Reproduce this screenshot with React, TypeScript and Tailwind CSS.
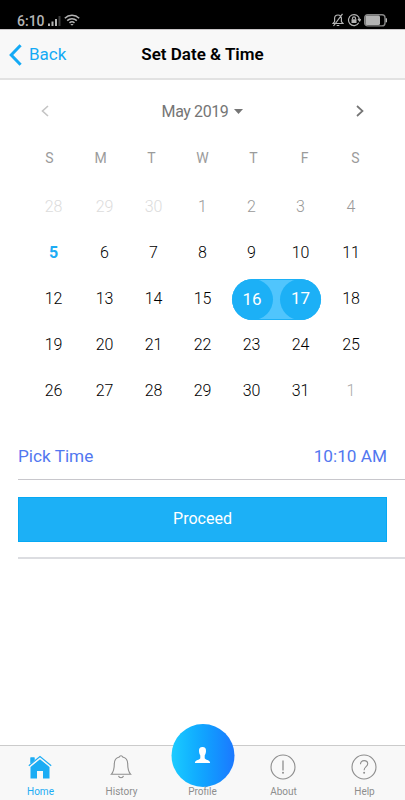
import { ReactNode } from 'react'

type Day = { n: number; tone?: 'out' | 'past' | 'next' | 'today' | 'start' | 'end' }

const weekdays = ['S', 'M', 'T', 'W', 'T', 'F', 'S']

const special: Record<number, Day['tone']> = { 5: 'today', 16: 'start', 17: 'end' }

const days: Day[] = [
  { n: 28, tone: 'out' },
  { n: 29, tone: 'out' },
  { n: 30, tone: 'out' },
  ...Array.from({ length: 31 }, (_, i): Day => ({ n: i + 1, tone: i < 4 ? 'past' : special[i + 1] })),
  { n: 1, tone: 'next' },
]

const tones = {
  out: 'text-[#dcdcdc] font-light',
  past: 'text-[#999] font-light',
  next: 'text-[#aaa] font-light',
  today: 'font-bold text-[#1cacf4]',
  start: '',
  end: '',
}

function StatusBar() {
  return (
    <div className="flex h-[29px] items-end justify-between bg-black pl-[17px] pr-[18px] text-[#b4b4b4]">
      <div className="flex items-center">
        <span className="w-[31px] text-[14px] font-medium leading-[16px]">6:10</span>
        <svg width="13" height="11" viewBox="0 0 13 11" fill="currentColor">
          <rect x="0" y="7.5" width="2" height="2.5" />
          <rect x="3.5" y="5.5" width="2" height="4.5" />
          <rect x="7" y="3" width="2" height="7" />
          <rect x="10.5" y="0" width="2" height="10" fill="#3d3d3d" />
        </svg>
        <svg className="mb-[3px] ml-[3px]" width="16" height="12" viewBox="0 0 16 12" fill="none" stroke="currentColor" strokeWidth="1.5">
          <path d="M.8 4.2a10.4 10.4 0 0 1 14.4 0M3.2 6.6a7 7 0 0 1 9.6 0M5.5 8.9a3.7 3.7 0 0 1 5 0" />
          <path d="M6.4 10 8 11.8 9.6 10Z" fill="currentColor" stroke="none" />
        </svg>
      </div>
      <div className="flex items-center pb-[2px]">
        <svg width="12" height="14" viewBox="0 0 12 14" fill="none" stroke="currentColor" strokeWidth="1.2">
          <path d="M1 10.5h10L9.4 8.6V5.3C9.4 3.2 8 2 6 2S2.6 3.2 2.6 5.3v3.3ZM4.7 12.5h2.6M10.5 .8 1.5 13" />
        </svg>
        <svg className="ml-[3px]" width="14" height="14" viewBox="0 0 14 14" fill="none" stroke="currentColor" strokeWidth="1.2">
          <path d="M11.8 9.8A5.5 5.5 0 1 1 12.5 6.5M11 6l1.7 2L13.7 6" />
          <rect x="4.5" y="6.3" width="5" height="3.7" fill="currentColor" stroke="none" />
          <path d="M5.5 6.5V5.3a1.5 1.5 0 0 1 3 0v1.2" />
        </svg>
        <svg className="ml-[3px]" width="23" height="13" viewBox="0 0 23 13">
          <rect x=".7" y=".7" width="20.3" height="11.2" rx="3" fill="none" stroke="#858585" strokeWidth="1.4" />
          <rect x="1.5" y="1.5" width="14.5" height="9.6" rx="1.5" fill="#b4b4b4" />
          <rect x="21.6" y="4.3" width="1.4" height="4" fill="#b4b4b4" />
        </svg>
      </div>
    </div>
  )
}

function Header() {
  return (
    <div className="grid h-[51px] grid-cols-3 items-center border-t border-b-2 border-t-[#c9c6c8] border-b-[#e2e2e2] bg-[#f8f8f8] pt-px">
      <button className="flex items-center pl-[9px] text-[17px] text-[#14aaf5]">
        <svg className="mr-[7px]" width="13" height="22" viewBox="0 0 13 22" fill="none" stroke="currentColor" strokeWidth="3">
          <path d="M11.6 1.2 2.2 11l9.4 9.8" />
        </svg>
        Back
      </button>
      <h1 className="whitespace-nowrap text-center text-[17px] font-semibold text-black">Set Date &amp; Time</h1>
    </div>
  )
}

function DayCell({ n, tone }: Day) {
  if (tone === 'start' || tone === 'end') {
    const start = tone === 'start'
    return (
      <div
        className={`flex h-[41px] items-center border-y border-[#1cb0f6] bg-[#50c5fd] text-[17px] text-white ${
          start ? 'ml-[4px] justify-start rounded-l-full' : 'mr-[5px] justify-end rounded-r-full'
        }`}
      >
        <span
          className={`flex h-[41px] w-[41px] items-center justify-center rounded-full bg-[#1cb0f6] ${
            start ? 'pt-px pr-px' : 'pb-px'
          }`}
        >
          {n}
        </span>
      </div>
    )
  }
  return <div className={`text-center ${tone ? tones[tone] : 'font-light text-black'}`}>{n}</div>
}

function Calendar() {
  return (
    <section>
      <div className="flex h-[62px] items-center justify-between pl-10 pr-[40px] text-[#757575]">
        <svg width="10" height="12" viewBox="0 0 10 12" fill="none" stroke="#c4c4c4" strokeWidth="1.6">
          <path d="M8 1 2.5 6 8 11" />
        </svg>
        <div className="flex items-center gap-[6px] pt-px text-[16px] tracking-[-0.4px]">
          May 2019
          <svg width="9" height="5" viewBox="0 0 9 5" fill="currentColor">
            <path d="M0 0h9L4.5 5Z" />
          </svg>
        </div>
        <svg width="10" height="12" viewBox="0 0 10 12" fill="none" stroke="currentColor" strokeWidth="1.7">
          <path d="M2 1l5.5 5L2 11" />
        </svg>
      </div>
      <div className="grid h-8 grid-cols-7 items-center px-6 text-center text-[14px] text-[#9b9b9b]">
        {weekdays.map((d, i) => (
          <span key={i}>{d}</span>
        ))}
      </div>
      <div className="ml-7 mt-[10px] grid auto-rows-[46px] grid-cols-[51px_51px_47px_51px_47px_51px_50px] items-center text-[16px]">
        {days.map((d, i) => (
          <DayCell key={i} {...d} />
        ))}
      </div>
    </section>
  )
}

function Tab({ label, active, children }: { label: string; active?: boolean; children: ReactNode }) {
  return (
    <button className={`relative flex flex-1 flex-col items-center ${active ? 'text-[#1cacf4]' : 'text-[#8e8e8e]'}`}>
      <span className="mt-[7px] flex h-[27px] items-center pr-px">{children}</span>
      <span className="mt-[6px] text-[10px] leading-[12px]">{label}</span>
    </button>
  )
}

function TabBar() {
  return (
    <nav className="flex h-[55px] border-t border-[#cbcbcb] bg-[#f8f8f8]">
      <Tab label="Home" active>
        <svg width="24" height="24" viewBox="0 0 24 24" fill="currentColor">
          <path d="M2.5 2.5H6.500v3.500L2.500 9.500Z" />
          <path d="M12 4.200 21.500 12v11.500H15V16H9v7.500H2.500V12Z" />
          <path d="M.8 11.300 12 2.200l11.200 9.100" fill="none" stroke="#f8f8f8" strokeWidth="2.200" />
          <path d="M2.5 2.5H6.5V5L2.500 8.300Z" />
          <path d="M.8 10.700 12 1.500l11.200 9.200" fill="none" stroke="currentColor" strokeWidth="1.200" />
        </svg>
      </Tab>
      <Tab label="History">
        <svg width="22" height="26" viewBox="0 0 22 26" fill="none" stroke="currentColor" strokeWidth="1.1">
          <path d="M9.300 3a1.800 1.800 0 0 1 3.400 0c3.600.8 5 3.500 5 7 0 6 1 8.200 3 10.300H1.300c2-2.100 3-4.300 3-10.300 0-3.500 1.400-6.200 5-7ZM8.500 21.800a2.600 2.600 0 0 0 5 0" />
        </svg>
      </Tab>
      <Tab label="Profile">
        {/* raised circle overlaps the bar edge */}
        <span className="absolute left-1/2 -top-[22px] flex h-[63px] w-[63px] -translate-x-1/2 items-center justify-center rounded-full bg-gradient-to-r from-[#1cccff] to-[#1c78ff] pb-px text-white">
          <svg width="16" height="16" viewBox="0 0 16 16" fill="currentColor">
            <path d="M8 0c2.600 0 3.600 1.600 3.500 4 0 1.900-.6 3.400-1.300 4.400v2.800c.5 1.800 5.200 1.300 5.500 4.800H.3c.3-3.500 5-3 5.500-4.800V8.400C5.100 7.400 4.500 5.900 4.500 4 4.400 1.600 5.400 0 8 0Z" />
          </svg>
        </span>
      </Tab>
      <Tab label="About">
        <svg width="26" height="26" viewBox="0 0 26 26" fill="none" stroke="currentColor" strokeWidth="1.1">
          <circle cx="13" cy="13" r="12" />
          <path d="M13 6.500v10" strokeWidth="1.300" />
          <circle cx="13" cy="18.800" r="1" fill="currentColor" stroke="none" />
        </svg>
      </Tab>
      <Tab label="Help">
        <svg width="26" height="26" viewBox="0 0 26 26" fill="none" stroke="currentColor" strokeWidth="1.1">
          <circle cx="13" cy="13" r="12" />
          <path d="M9.500 10.200c0-2.200 1.400-3.600 3.600-3.600 2.100 0 3.600 1.200 3.600 3.100 0 3-3.600 2.800-3.600 6.600" />
          <circle cx="13.100" cy="18.800" r="1" fill="currentColor" stroke="none" />
        </svg>
      </Tab>
    </nav>
  )
}

export default function App() {
  return (
    <div className="flex h-screen w-full flex-col overflow-hidden bg-white font-[Roboto,'Liberation_Sans',sans-serif]">
      <StatusBar />
      <Header />
      <main className="flex-1">
        <Calendar />
        <div className="ml-[18px] mt-[18px] flex h-[48px] items-center justify-between border-b border-[#c8c7cc] pr-[18px] pt-[2px] text-[17.2px] text-[#5277f0]">
          <span>Pick Time</span>
          <span>10:10 AM</span>
        </div>
        <div className="ml-[18px] border-b-2 border-[#dcdde1] pb-[15px] pr-[18px] pt-[17px]">
          <button className="h-[45px] w-full border border-[#06a9f4] bg-[#1cb0f6] pb-[2px] text-[16px] text-white">
            Proceed
          </button>
        </div>
      </main>
      <TabBar />
    </div>
  )
}
